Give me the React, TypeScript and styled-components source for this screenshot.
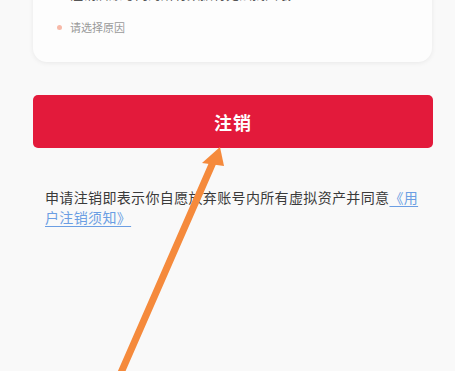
import styled, { createGlobalStyle } from "styled-components";

const GlobalStyle = createGlobalStyle`
  html, body {
    margin: 0;
    padding: 0;
    background: #f9f9f9;
  }
  * {
    box-sizing: border-box;
  }
`;

const Page = styled.div`
  position: relative;
  width: 455px;
  height: 371px;
  overflow: hidden;
  background: #f9f9f9;
  font-family: "Noto Sans CJK SC", "Noto Sans", sans-serif;
  padding-left: 33px;
`;

const Card = styled.div`
  width: 399px;
  margin-top: -33px;
  padding: 16px 24px 25px 24px;
  background: #fdfdfd;
  border-radius: 14px;
  box-shadow: 0 1px 5px rgba(0, 0, 0, 0.07);
  display: flex;
  flex-direction: column;
  gap: 14px;
`;

const Row = styled.div`
  display: flex;
  align-items: center;
  gap: 8px;
  height: 20px;
`;

const Dot = styled.span<{ $color: string }>`
  width: 5px;
  height: 5px;
  border-radius: 50%;
  background: ${(p) => p.$color};
  flex-shrink: 0;
`;

const RowText = styled.span<{ $muted?: boolean }>`
  font-size: ${(p) => (p.$muted ? "11px" : "13px")};
  color: ${(p) => (p.$muted ? "#9a9a9a" : "#555")};
  white-space: nowrap;
`;

const Button = styled.button`
  display: flex;
  align-items: center;
  justify-content: center;
  width: 400px;
  height: 53px;
  margin-top: 33px;
  border: none;
  border-radius: 5px;
  background: #e31a3b;
  color: #fff;
  font-family: "Noto Sans CJK SC", sans-serif;
  font-size: 18px;
  font-weight: 700;
  letter-spacing: 1px;
  padding: 0;
`;

const Note = styled.p`
  width: 380px;
  margin: 39px 0 0 12px;
  font-size: 14px;
  line-height: 20px;
  letter-spacing: 0.35px;
  color: #3a3a3a;
`;

const Link = styled.a`
  color: #6b9ee3;
  text-decoration: underline;
  text-underline-offset: 3px;
`;

const Arrow = styled.svg`
  position: absolute;
  left: 0;
  top: 0;
  pointer-events: none;
`;

export default function App() {
  return (
    <>
      <GlobalStyle />
      <Page>
        <Card>
          <Row>
            <Dot $color="transparent" />
            <RowText>注销后账号内的所有数据将无法找回哦</RowText>
          </Row>
          <Row>
            <Dot $color="#f7b9a8" />
            <RowText $muted>请选择原因</RowText>
          </Row>
        </Card>
        <Button>注销</Button>
        <Note>
          申请注销即表示你自愿放弃账号内所有虚拟资产并同意
          <Link>《用户注销须知》</Link>
        </Note>
        <Arrow width="455" height="371" viewBox="0 0 455 371">
          <line
            x1="120"
            y1="375"
            x2="214"
            y2="160"
            stroke="#f58a3c"
            strokeWidth="7"
            strokeLinecap="round"
          />
          <polygon points="220,147 202,163 224,166" fill="#f58a3c" />
        </Arrow>
      </Page>
    </>
  );
}
